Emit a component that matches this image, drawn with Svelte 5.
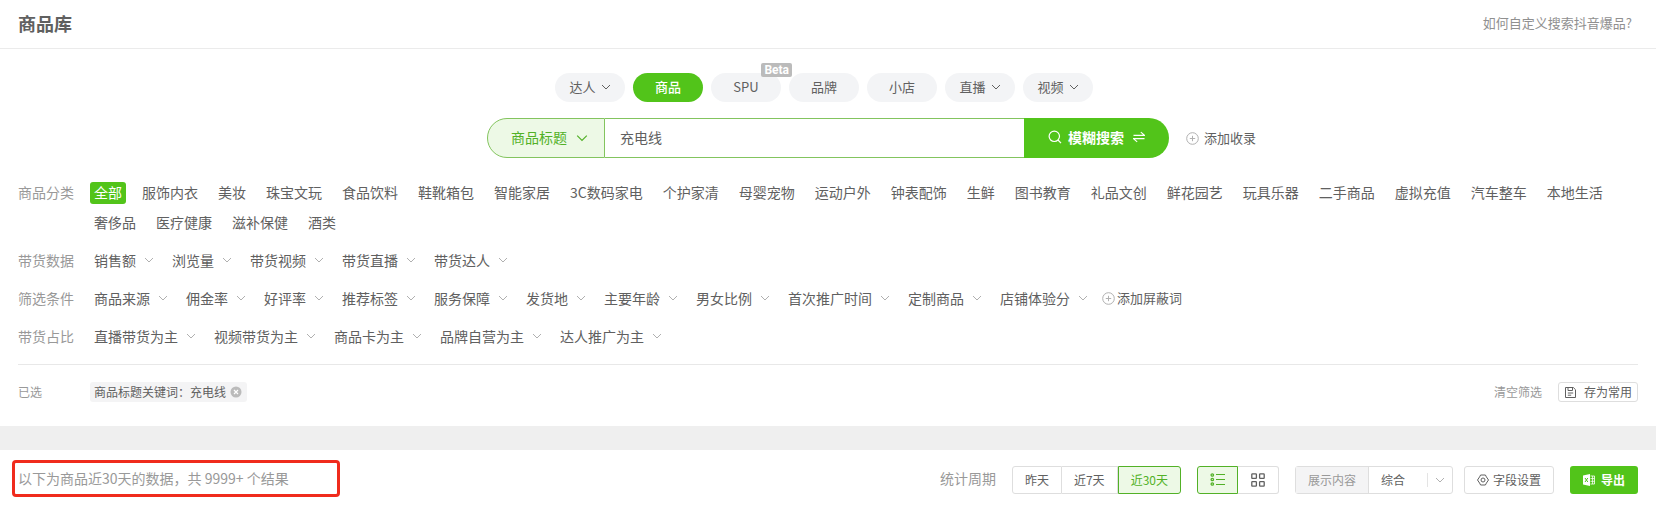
<script lang="ts">
	interface Tab {
		name: string;
		menu?: boolean;
		badge?: string;
	}

	const tabs: Tab[] = [
		{ name: '达人', menu: true },
		{ name: '商品' },
		{ name: 'SPU', badge: 'Beta' },
		{ name: '品牌' },
		{ name: '小店' },
		{ name: '直播', menu: true },
		{ name: '视频', menu: true }
	];

	const categories = [
		'全部', '服饰内衣', '美妆', '珠宝文玩', '食品饮料', '鞋靴箱包', '智能家居', '3C数码家电',
		'个护家清', '母婴宠物', '运动户外', '钟表配饰', '生鲜', '图书教育', '礼品文创', '鲜花园艺',
		'玩具乐器', '二手商品', '虚拟充值', '汽车整车', '本地生活', '奢侈品', '医疗健康', '滋补保健', '酒类'
	];

	const filters = [
		{ label: '带货数据', items: ['销售额', '浏览量', '带货视频', '带货直播', '带货达人'] },
		{
			label: '筛选条件',
			items: [
				'商品来源', '佣金率', '好评率', '推荐标签', '服务保障', '发货地', '主要年龄',
				'男女比例', '首次推广时间', '定制商品', '店铺体验分'
			],
			extra: '添加屏蔽词'
		},
		{ label: '带货占比', items: ['直播带货为主', '视频带货为主', '商品卡为主', '品牌自营为主', '达人推广为主'] }
	];

	const periods = ['昨天', '近7天', '近30天'];

	let activeTab = $state('商品');
	let activeCategory = $state('全部');
	let activePeriod = $state('近30天');
	let view = $state('list');
	let keyword = $state('充电线');
</script>

{#snippet chevron(size: number)}
	<svg class="chevron" width={size} height={size} viewBox="0 0 10 10" fill="none" stroke="currentColor" aria-hidden="true">
		<path d="M1 3l4 4 4-4" />
	</svg>
{/snippet}

{#snippet plus()}
	<svg class="plus" width="13" height="13" viewBox="0 0 13 13" fill="none" stroke="currentColor" aria-hidden="true">
		<circle cx="6.5" cy="6.5" r="5.8" />
		<path d="M6.5 3.8v5.4M3.8 6.5h5.4" />
	</svg>
{/snippet}

<header class="header">
	<h1>商品库</h1>
	<a href="#help">如何自定义搜索抖音爆品?</a>
</header>

<main>
	<section class="panel">
		<nav class="tabs">
			{#each tabs as tab}
				<button class={['tab', activeTab === tab.name && 'active']} onclick={() => (activeTab = tab.name)}>
					{tab.name}
					{#if tab.menu}{@render chevron(10)}{/if}
					{#if tab.badge}<span class="badge">{tab.badge}</span>{/if}
				</button>
			{/each}
		</nav>

		<div class="search-row">
			<form class="search" onsubmit={(e) => e.preventDefault()}>
				<div class="search-type">
					<select aria-label="搜索类型">
						<option>商品标题</option>
					</select>
					{@render chevron(12)}
				</div>
				<input type="text" aria-label="关键词" bind:value={keyword} />
				<button class="search-button">
					<svg width="14" height="14" viewBox="0 0 14 14" fill="none" stroke="currentColor" stroke-width="1.2" aria-hidden="true">
						<circle cx="6.3" cy="6.3" r="5.2" />
						<path d="M10 10l3 3.2" />
					</svg>
					模糊搜索
					<svg class="swap" width="12" height="12" viewBox="0 0 12 12" fill="none" stroke="currentColor" stroke-width="1.1" aria-hidden="true">
						<path d="M0.5 4.4h11L7.8 1.2M11.5 7.6h-11l3.7 3.2" />
					</svg>
				</button>
			</form>
			<button class="add">{@render plus()}添加收录</button>
		</div>

		<div class="filters">
			<div class="row">
				<span class="label">商品分类</span>
				<div class="categories">
					{#each categories as name}
						<button class={['category', activeCategory === name && 'active']} onclick={() => (activeCategory = name)}>{name}</button>
					{/each}
				</div>
			</div>
			{#each filters as filter}
				<div class="row">
					<span class="label">{filter.label}</span>
					<div class="options">
						{#each filter.items as item}
							<button class="option">{item}{@render chevron(10)}</button>
						{/each}
						{#if filter.extra}
							<button class="block-word">{@render plus()}{filter.extra}</button>
						{/if}
					</div>
				</div>
			{/each}
		</div>

		<div class="selected">
			<span class="label">已选</span>
			<span class="tag">
				商品标题关键词：充电线
				<button aria-label="移除">
					<svg width="12" height="12" viewBox="0 0 12 12" aria-hidden="true">
						<circle cx="6" cy="6" r="5.5" fill="#bbb" />
						<path d="M4 4l4 4M8 4l-4 4" stroke="#fff" stroke-width="1.2" />
					</svg>
				</button>
			</span>
			<button class="clear">清空筛选</button>
			<button class="save">
				<svg width="11" height="11" viewBox="0 0 11 11" fill="none" stroke="currentColor" aria-hidden="true">
					<path d="M0.5 0.5h7.8l2.2 2.2v7.8h-10zM3 0.8v2.7h4.5V0.8M2.8 6h5.4M2.8 8.2h3.4" />
				</svg>
				存为常用
			</button>
		</div>
	</section>

	<section class="toolbar">
		<p class="result">以下为商品近30天的数据，共 9999+ 个结果</p>

		<span class="period-label">统计周期</span>
		<div class="segment">
			{#each periods as period}
				<button class={[activePeriod === period && 'active']} onclick={() => (activePeriod = period)}>{period}</button>
			{/each}
		</div>

		<div class="segment views">
			<button class={[view === 'list' && 'active']} aria-label="列表" onclick={() => (view = 'list')}>
				<svg width="15" height="13" viewBox="0 0 15 13" fill="none" stroke="currentColor" aria-hidden="true">
					<g stroke-width="1.3">
						<circle cx="2.3" cy="2" r="1.2" />
						<circle cx="2.3" cy="6.5" r="1.2" />
						<circle cx="2.3" cy="11" r="1.2" />
					</g>
					<path d="M6 1.5h9M6 6.5h9M6 11.5h9" />
				</svg>
			</button>
			<button class={[view === 'grid' && 'active']} aria-label="宫格" onclick={() => (view = 'grid')}>
				<svg width="14" height="14" viewBox="0 0 14 14" fill="none" stroke="currentColor" stroke-width="1.3" aria-hidden="true">
					<rect x="0.8" y="0.8" width="4.6" height="4.6" rx="0.6" />
					<rect x="8.6" y="0.8" width="4.6" height="4.6" rx="0.6" />
					<rect x="0.8" y="8.6" width="4.6" height="4.6" rx="0.6" />
					<rect x="8.6" y="8.6" width="4.6" height="4.6" rx="0.6" />
				</svg>
			</button>
		</div>

		<div class="content-type">
			<label for="content-type">展示内容</label>
			<div class="content-select">
				<select id="content-type">
					<option>综合</option>
				</select>
				<span class="arrow">{@render chevron(10)}</span>
			</div>
		</div>

		<button class="fields">
			<svg width="12" height="12" viewBox="0 0 12 12" fill="none" stroke="currentColor" aria-hidden="true">
				<path d="M3.6 1h4.8l1 1.9L11.5 6l-2.1 3.1-1 1.9H3.6l-1-1.9L0.5 6l2.1-3.1z" />
				<circle cx="6" cy="6" r="2" />
			</svg>
			字段设置
		</button>

		<button class="export">
			<svg width="12" height="12" viewBox="0 0 12 12" fill="currentColor" aria-hidden="true">
				<path d="M0 1.4L7 0v12L0 10.6z" />
				<path d="M7.5 2h4v8h-4M7.5 4.6h4M7.5 7.3h4M9.6 2v8" fill="none" stroke="currentColor" stroke-width="0.8" />
				<path d="M2 4l2.8 4M4.8 4L2 8" fill="none" stroke="#52c41a" />
			</svg>
			导出
		</button>
	</section>
</main>

<style>
	:global(body) {
		margin: 0;
		background: #fff;
		color: #606060;
		font: 14px/20px 'Noto Sans CJK SC', sans-serif;
	}

	button,
	input,
	select {
		box-sizing: border-box;
		margin: 0;
		padding: 0;
		border: 0;
		background: none;
		color: inherit;
		font: inherit;
		white-space: nowrap;
	}

	button,
	select {
		cursor: pointer;
	}

	select {
		appearance: none;
		outline: none;
	}

	svg {
		flex: none;
	}

	.header {
		display: flex;
		align-items: center;
		justify-content: space-between;
		height: 46px;
		padding: 0 24px 2px 18px;
		border-bottom: 1px solid #ebebeb;
	}

	.header h1 {
		margin: 0;
		font-size: 18px;
		font-weight: 700;
	}

	.header a {
		color: #909090;
		font-size: 13px;
		text-decoration: none;
	}

	.panel {
		padding: 24px 18px;
	}

	.tabs {
		display: flex;
		justify-content: center;
		font-size: 13px;
	}

	.tab {
		position: relative;
		display: flex;
		align-items: center;
		justify-content: center;
		gap: 5px;
		width: 70px;
		height: 29px;
		margin-right: 8px;
		padding-bottom: 2px;
		border-radius: 15px;
		background: #f3f4f6;
	}

	.tab.active {
		background: #52c41a;
		color: #fff;
		font-weight: 500;
	}

	.badge {
		position: absolute;
		z-index: 1;
		top: -10px;
		right: -11px;
		padding: 0 3px;
		border-radius: 2px;
		background: #bbb;
		color: #fff;
		font: 700 12px/14px Roboto, sans-serif;
	}

	.search-row {
		display: grid;
		grid-template-columns: 1fr minmax(0, 682px) 1fr;
		align-items: center;
		margin-top: 16px;
	}

	.search {
		grid-column: 2;
		display: flex;
		height: 40px;
	}

	.search-type {
		position: relative;
		box-sizing: border-box;
		width: 118px;
		border: 1px solid #83c45e;
		border-radius: 20px 0 0 20px;
		background: #edf9e6;
		color: #52b127;
	}

	.search-type select {
		width: 100%;
		height: 100%;
		padding: 0 0 2px 23px;
	}

	.search-type .chevron {
		position: absolute;
		top: 13px;
		right: 16px;
		pointer-events: none;
	}

	.search input {
		flex: 1;
		min-width: 0;
		padding: 0 15px 2px;
		border: solid #83c45e;
		border-width: 1px 0;
		outline: none;
	}

	.search-button {
		display: flex;
		align-items: center;
		gap: 6px;
		padding: 0 24px 2px;
		border-radius: 0 20px 20px 0;
		background: #52c41a;
		color: #fff;
		font-weight: 700;
	}

	.swap {
		margin-left: 3px;
	}

	.add {
		display: flex;
		align-items: center;
		justify-self: start;
		gap: 5px;
		margin-left: 17px;
		font-size: 13px;
	}

	.plus {
		color: #b0b0b0;
	}

	.filters {
		display: flex;
		flex-direction: column;
		gap: 16px;
		margin-top: 24px;
		padding-bottom: 16px;
		border-bottom: 1px solid #e8e8e8;
	}

	.row {
		display: flex;
	}

	.label {
		flex: none;
		width: 72px;
		color: #999;
	}

	.categories {
		display: flex;
		flex-wrap: wrap;
		gap: 8px 12px;
	}

	.category {
		padding: 0 4px 2px;
		border-radius: 3px;
	}

	.category.active {
		background: #52c41a;
		color: #fff;
	}

	.options {
		display: flex;
		flex-wrap: wrap;
		gap: 8px 18px;
		padding-left: 4px;
	}

	.option {
		display: flex;
		align-items: center;
		gap: 8px;
		padding-bottom: 2px;
	}

	.option .chevron {
		color: #b0b0b0;
	}

	.block-word {
		display: flex;
		align-items: center;
		gap: 2px;
		margin-left: -4px;
		padding-bottom: 2px;
		font-size: 13px;
	}

	.selected {
		display: flex;
		align-items: center;
		padding-top: 17px;
		font-size: 12px;
	}

	.tag {
		display: flex;
		align-items: center;
		gap: 4px;
		padding: 0 5px 0 4px;
		border-radius: 3px;
		background: #f4f4f5;
	}

	.tag button {
		display: flex;
	}

	.clear {
		margin-left: auto;
		color: #999;
	}

	.save {
		display: flex;
		align-items: center;
		gap: 8px;
		margin-left: 16px;
		padding: 0 5px 0 6px;
		border: 1px solid #dedede;
		border-radius: 3px;
		line-height: 18px;
	}

	.toolbar {
		display: flex;
		align-items: center;
		padding: 16px 18px 15px;
		border-top: 24px solid #efefef;
		font-size: 12px;
	}

	.result,
	.period-label {
		padding-bottom: 4px;
		color: #999;
		font-size: 14px;
	}

	.result {
		position: relative;
		margin: 0 auto 0 0;
	}

	.result::after {
		position: absolute;
		inset: -8px -51px -5px -6px;
		border: 3px solid #f02b1d;
		border-radius: 4px;
		content: '';
	}

	.period-label {
		margin-right: 16px;
	}

	.segment {
		display: flex;
		margin-right: 16px;
	}

	.segment button {
		height: 28px;
		padding: 0 12px 1px;
		border: 1px solid #dedede;
	}

	.segment button + button {
		border-left: 0;
	}

	.segment button:first-child {
		border-radius: 3px 0 0 3px;
	}

	.segment button:last-child {
		border-radius: 0 3px 3px 0;
	}

	.segment button.active {
		border: 1px solid #52b127;
		background: #edf9e6;
		color: #52b127;
	}

	.views button {
		display: flex;
		align-items: center;
		justify-content: center;
		width: 41px;
	}

	.content-type {
		display: flex;
		box-sizing: border-box;
		height: 28px;
		margin-right: 11px;
		border: 1px solid #dedede;
		border-radius: 3px;
		line-height: 26px;
	}

	.content-type label {
		padding: 0 12px;
		border-right: 1px solid #dedede;
		background: #f4f4f5;
		color: #999;
	}

	.content-select {
		position: relative;
		display: flex;
	}

	.content-select select {
		width: 83px;
		padding-left: 12px;
	}

	.arrow {
		position: absolute;
		top: 6px;
		right: 0;
		display: flex;
		align-items: center;
		justify-content: center;
		width: 24px;
		height: 14px;
		border-left: 1px solid #e4e4e4;
		color: #b0b0b0;
		pointer-events: none;
	}

	.fields,
	.export {
		display: flex;
		align-items: center;
		height: 28px;
		padding: 0 12px;
		border-radius: 3px;
	}

	.fields {
		gap: 4px;
		margin-right: 16px;
		border: 1px solid #dedede;
	}

	.export {
		gap: 6px;
		padding: 0 13px;
		background: #52c41a;
		color: #fff;
		font-weight: 700;
	}
</style>
